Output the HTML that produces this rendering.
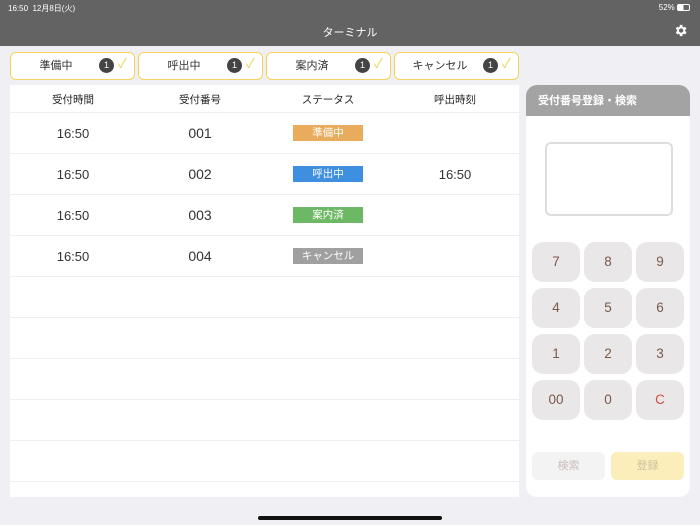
<!DOCTYPE html><html><head><meta charset="utf-8"><style>
*{margin:0;padding:0;box-sizing:border-box}
body{width:700px;height:525px;background:#f0eff4;font-family:"Liberation Sans","Noto Sans CJK JP",sans-serif;position:relative;overflow:hidden;color:#333}
.a{position:absolute}
.hdr{left:0;top:0;width:700px;height:46px;background:#636363;color:#fff}
.tab{top:52px;height:28px;width:125px;background:#fff;border:1.5px solid #f3d35a;border-radius:6px;font-size:11px;line-height:14px}
.tab .t{position:absolute;left:0;width:90px;top:6px;text-align:center}
.tab .n{position:absolute;left:88px;top:5px;width:15px;height:15px;border-radius:8px;background:#444;color:#fff;font-size:9px;text-align:center;line-height:15px}
.tab .c{position:absolute;left:107px;top:4px;color:#f3d35a;font-size:13px}
.tbl{left:10px;top:85px;width:509px;height:412px;background:#fff}
.row{position:absolute;left:0;width:509px;border-bottom:1px solid #eee;height:41px;line-height:16px}
.cell{position:absolute;text-align:center;width:120px}
.bd{position:absolute;left:283px;top:12px;width:70px;height:16px;color:#fff;font-size:10.5px;text-align:center;line-height:16px}
.key{width:48px;height:40px;background:#e9e7e7;border-radius:11px;text-align:center;line-height:40px;font-size:13.5px;color:#7a5a4a}
</style></head><body>
<div class="a hdr">
<div class="a" style="left:8px;top:3px;font-size:8px">16:50&nbsp; 12月8日(火)</div>
<div class="a" style="right:10px;top:3px;font-size:8px">52% <span style="display:inline-block;width:13px;height:7px;border:1px solid #fff;border-radius:2px;vertical-align:-1px;background:linear-gradient(90deg,#fff 50%,transparent 50%)"></span></div>
<div class="a" style="left:0;width:700px;top:24px;text-align:center;font-size:11px">ターミナル</div>
<svg class="a" style="left:673px;top:23px" width="15" height="15" viewBox="0 0 24 24"><path fill="#fff" d="M19.4 13a7.5 7.5 0 000-2l2.1-1.6-2-3.5-2.5 1a7.5 7.5 0 00-1.7-1L15 3h-4l-.4 2.9a7.5 7.5 0 00-1.7 1l-2.5-1-2 3.5L6.6 11a7.5 7.5 0 000 2l-2.1 1.6 2 3.5 2.5-1a7.5 7.5 0 001.7 1L11 21h4l.4-2.9a7.5 7.5 0 001.7-1l2.5 1 2-3.5zM13 15.5A3.5 3.5 0 1113 8.5a3.5 3.5 0 010 7z"/></svg>
</div>
<div class="a tab" style="left:10px"><span class="t">準備中</span><span class="n">1</span><span class="c">✓</span></div>
<div class="a tab" style="left:138px"><span class="t">呼出中</span><span class="n">1</span><span class="c">✓</span></div>
<div class="a tab" style="left:266px"><span class="t">案内済</span><span class="n">1</span><span class="c">✓</span></div>
<div class="a tab" style="left:394px"><span class="t">キャンセル</span><span class="n">1</span><span class="c">✓</span></div>
<div class="a tbl">
<div class="row" style="top:0;height:28px;font-size:10.5px;color:#222"><div class="cell" style="left:3px;top:7px">受付時間</div><div class="cell" style="left:130px;top:7px">受付番号</div><div class="cell" style="left:258px;top:7px">ステータス</div><div class="cell" style="left:385px;top:7px">呼出時刻</div></div>
<div class="row" style="top:28px;font-size:13px"><div class="cell" style="left:3px;top:13px">16:50</div><div class="cell" style="left:130px;top:12px;font-size:14px">001</div><div class="bd" style="background:#e8ac5c">準備中</div></div>
<div class="row" style="top:69px;font-size:13px"><div class="cell" style="left:3px;top:13px">16:50</div><div class="cell" style="left:130px;top:12px;font-size:14px">002</div><div class="bd" style="background:#3f8fe0">呼出中</div><div class="cell" style="left:385px;top:13px">16:50</div></div>
<div class="row" style="top:110px;font-size:13px"><div class="cell" style="left:3px;top:13px">16:50</div><div class="cell" style="left:130px;top:12px;font-size:14px">003</div><div class="bd" style="background:#6cb864">案内済</div></div>
<div class="row" style="top:151px;font-size:13px"><div class="cell" style="left:3px;top:13px">16:50</div><div class="cell" style="left:130px;top:12px;font-size:14px">004</div><div class="bd" style="background:#a0a0a0">キャンセル</div></div>
<div class="row" style="top:192px"></div><div class="row" style="top:233px"></div><div class="row" style="top:274px"></div><div class="row" style="top:315px"></div><div class="row" style="top:356px"></div>
</div>
<div class="a" style="left:526px;top:85px;width:164px;height:412px;background:#fff;border-radius:11px;overflow:hidden">
<div class="a" style="left:0;top:0;width:164px;height:31px;background:#a3a3a3;color:#fff;font-size:11px;padding:10px 0 0 12px;font-weight:bold;line-height:13px">受付番号登録・検索</div>
<div class="a" style="left:19px;top:57px;width:128px;height:74px;border:2px solid #ddd;border-radius:6px"></div>
</div>
<div class="a key" style="left:532px;top:242px">7</div><div class="a key" style="left:584px;top:242px">8</div><div class="a key" style="left:636px;top:242px">9</div>
<div class="a key" style="left:532px;top:288px">4</div><div class="a key" style="left:584px;top:288px">5</div><div class="a key" style="left:636px;top:288px">6</div>
<div class="a key" style="left:532px;top:334px">1</div><div class="a key" style="left:584px;top:334px">2</div><div class="a key" style="left:636px;top:334px">3</div>
<div class="a key" style="left:532px;top:380px">00</div><div class="a key" style="left:584px;top:380px">0</div><div class="a key" style="left:636px;top:380px;color:#d05040">C</div>
<div class="a" style="left:532px;top:452px;width:73px;height:28px;background:#f4f3f3;border-radius:6px;text-align:center;line-height:28px;font-size:11px;color:#c8bcbc">検索</div>
<div class="a" style="left:611px;top:452px;width:73px;height:28px;background:#fbeebb;border-radius:6px;text-align:center;line-height:28px;font-size:11px;color:#cfc3a0">登録</div>
<div class="a" style="left:258px;top:516px;width:184px;height:4px;border-radius:2px;background:#111"></div>
</body></html>
